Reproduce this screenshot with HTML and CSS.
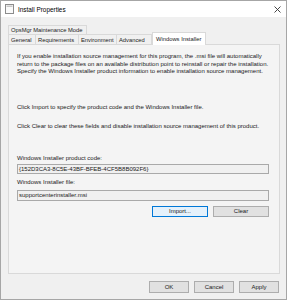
FILE: index.html
```html
<!DOCTYPE html>
<html>
<head>
<meta charset="utf-8">
<link rel="stylesheet" href="styles.css">
</head>
<body>
<div class="window">
  <div class="titlebar">
    <svg class="appicon" width="9" height="10" viewBox="0 0 9 10"><rect x="0.5" y="0.5" width="8" height="9" fill="#fafafa" stroke="#8c8c8c"/><rect x="1.5" y="1.5" width="6" height="1.5" fill="#c8c8c8"/></svg>
    <span class="title">Install Properties</span>
    <svg class="close" width="7" height="7" viewBox="0 0 7 7"><path d="M0.5 0.5L6.5 6.5M6.5 0.5L0.5 6.5" stroke="#333" stroke-width="0.9"/></svg>
  </div>
  <div class="body">
    <div class="tabs">
      <div class="tabrow back">
        <div class="tab">OpsMgr Maintenance Mode</div>
      </div>
      <div class="tabrow front">
        <div class="tab w-general">General</div>
        <div class="tab w-req">Requirements</div>
        <div class="tab w-env">Environment</div>
        <div class="tab w-adv">Advanced</div>
        <div class="tab selected w-win">Windows Installer</div>
      </div>
    </div>
    <div class="panel">
      <p class="intro">If you enable installation source management for this program, the .msi file will automatically return to the package files on an available distribution point to reinstall or repair the installation. Specify the Windows Installer product information to enable installation source management.</p>
      <p class="para p-import">Click Import to specify the product code and the Windows Installer file.</p>
      <p class="para p-clear">Click Clear to clear these fields and disable installation source management of this product.</p>
      <div class="label l-code">Windows Installer product code:</div>
      <div class="field">{152D3CA3-8C5E-43BF-BFEB-4CF5B8B092F6}</div>
      <div class="label l-file">Windows Installer file:</div>
      <div class="field f-file">supportcenterinstaller.msi</div>
      <div class="actions">
        <div class="btn focused">Import...</div>
        <div class="btn">Clear</div>
      </div>
    </div>
    <div class="footer">
      <div class="btn fbtn">OK</div>
      <div class="btn fbtn">Cancel</div>
      <div class="btn fbtn">Apply</div>
    </div>
  </div>
</div>
</body>
</html>
```
FILE: styles.css
```css
* { box-sizing: border-box; }
html, body { margin: 0; padding: 0; }
body {
  width: 287px;
  height: 300px;
  background: #f0f0f0;
  font-family: "Liberation Sans", Arial, sans-serif;
  font-size: 6px;
  color: #1a1a1a;
  overflow: hidden;
}
.window {
  width: 287px;
  height: 300px;
  border: 1px solid #a6a6a6;
  background: #f0f0f0;
  display: flex;
  flex-direction: column;
}
.titlebar {
  height: 16px;
  background: #ffffff;
  display: flex;
  align-items: center;
  padding-left: 4px;
  padding-right: 5px;
  flex: none;
}
.appicon { flex: none; }
.title {
  margin-left: 4px;
  font-size: 6.4px;
  color: #000;
  flex: 1;
}
.close { flex: none; }
.body {
  flex: 1;
  padding: 8px 7px 0 7px;
  display: flex;
  flex-direction: column;
}
.tabs { flex: none; }
.tabrow { display: flex; height: 9px; }
.tabrow.front { height: 10px; }
.tab {
  border: 1px solid #d9d9d9;
  border-bottom: none;
  background: #f0f0f0;
  display: flex;
  align-items: center;
  padding-left: 2px;
  white-space: nowrap;
  color: #1a1a1a;
  font-size: 5.8px;
}
.tabrow.back .tab { width: 79px; }
.w-general { width: 28px; }
.w-req { width: 43px; border-left: none; }
.w-env { width: 38px; border-left: none; }
.w-adv { width: 35px; border-left: none; }
.tab.selected {
  width: 54px;
  background: #ffffff;
  margin-top: -2px;
  height: 13px;
  border-left: 1px solid #d9d9d9;
  padding-left: 3px;
  position: relative;
  z-index: 1;
}
.panel {
  width: 272px;
  height: 230px;
  border: 1px solid #d9d9d9;
  background: #f4f4f4;
  padding: 8px 8px 0 8px;
  display: flex;
  flex-direction: column;
  flex: none;
}
.intro { width: 252px; }
.intro, .para { margin: 0; line-height: 7.7px; }
.p-import { margin-top: 28px; }
.p-clear { margin-top: 11px; }
.label { line-height: 8px; }
.l-code { margin-top: 23px; }
.l-file { margin-top: 4px; }
.field {
  margin-top: 2px;
  height: 10px;
  width: 252px;
  border: 1px solid #a9a9a9;
  background: #f0f0f0;
  padding-left: 1px;
  display: flex;
  align-items: center;
}
.f-file { margin-top: 4px; height: 11px; }
.actions {
  display: flex;
  justify-content: flex-end;
  gap: 5px;
  margin-top: 5px;
  width: 252px;
}
.btn {
  width: 56px;
  height: 11px;
  border: 1px solid #adadad;
  background: #e1e1e1;
  display: flex;
  align-items: center;
  justify-content: center;
  color: #1a1a1a;
}
.btn.focused { border-color: #0078d7; background: #e5f1fb; }
.footer {
  display: flex;
  justify-content: flex-end;
  gap: 5px;
  margin-top: 7px;
}
.fbtn { width: 40px; height: 12px; }
```
